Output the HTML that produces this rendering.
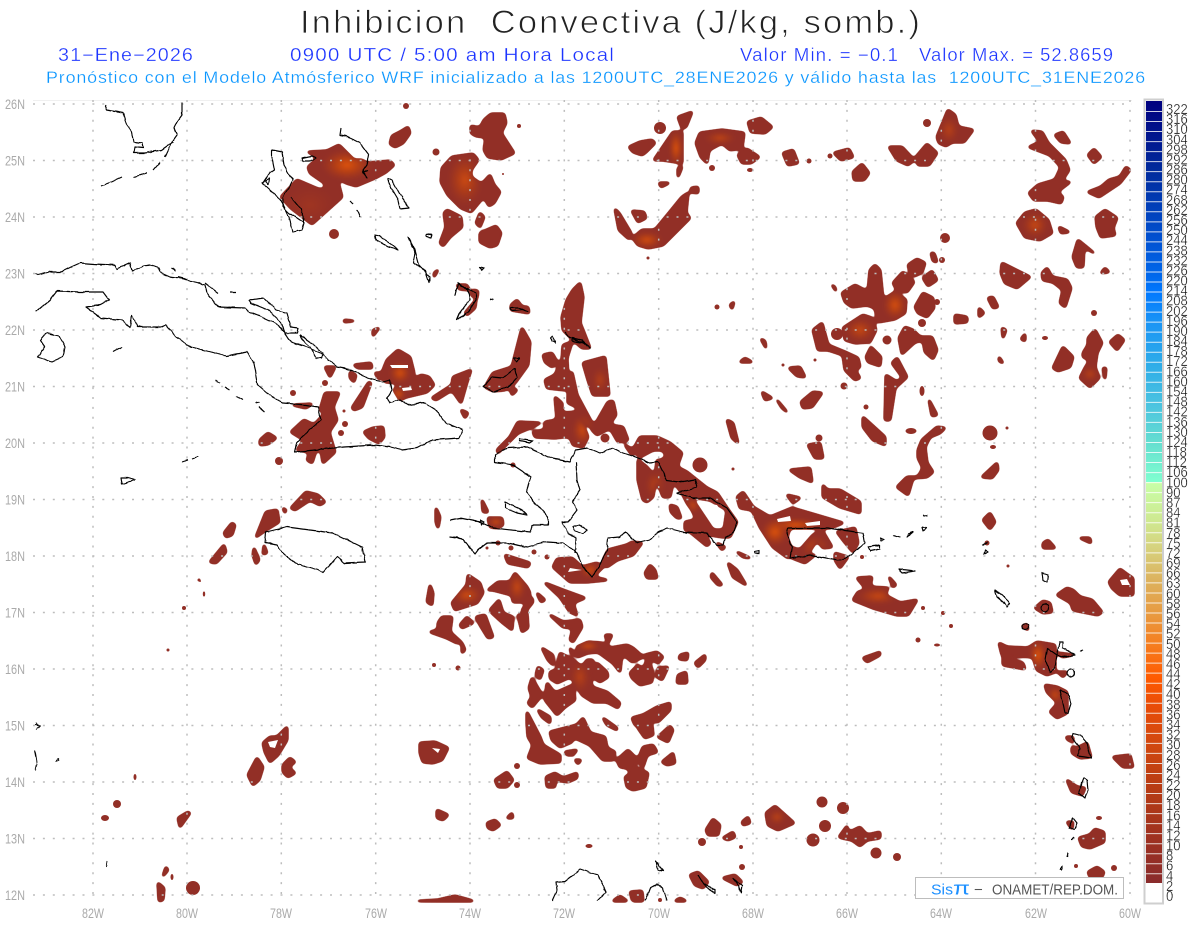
<!DOCTYPE html>
<html><head><meta charset="utf-8"><title>Inhibicion Convectiva</title>
<style>
html,body{margin:0;padding:0;background:#fff;width:1200px;height:927px;overflow:hidden}
svg{display:block;font-family:"Liberation Sans",sans-serif}
text{white-space:pre}
</style></head><body>
<svg width="1200" height="927" viewBox="0 0 1200 927" xmlns="http://www.w3.org/2000/svg">
<defs>
<filter id="sm" x="0" y="0" width="1200" height="927" filterUnits="userSpaceOnUse" color-interpolation-filters="sRGB"><feGaussianBlur stdDeviation="1.8"/><feComponentTransfer><feFuncA type="linear" slope="7" intercept="-2.6"/></feComponentTransfer></filter>
<filter id="wb" x="0" y="0" width="1200" height="927" filterUnits="userSpaceOnUse"><feTurbulence type="fractalNoise" baseFrequency=".13" numOctaves="2" seed="4" result="n"/><feDisplacementMap in="SourceGraphic" in2="n" scale="2.6" xChannelSelector="R" yChannelSelector="G"/></filter>
<radialGradient id="h"><stop offset="0" stop-color="#e0540c"/><stop offset=".45" stop-color="#c0440f" stop-opacity=".75"/><stop offset="1" stop-color="#a83a1c" stop-opacity="0"/></radialGradient>
<radialGradient id="m"><stop offset="0" stop-color="#b83f18" stop-opacity=".9"/><stop offset="1" stop-color="#a83a1c" stop-opacity="0"/></radialGradient>
<linearGradient id="cb1" gradientUnits="userSpaceOnUse" x1="0" y1="101" x2="0" y2="482">
<stop offset="0" stop-color="#00007f"/><stop offset=".18" stop-color="#002a9c"/><stop offset=".36" stop-color="#0050d0"/><stop offset=".46" stop-color="#0068ec"/><stop offset=".5" stop-color="#0078ff"/><stop offset=".58" stop-color="#1a94f5"/><stop offset=".7" stop-color="#30aee8"/><stop offset=".8" stop-color="#4cc4e0"/><stop offset=".9" stop-color="#66dfd0"/><stop offset="1" stop-color="#80ffd0"/>
</linearGradient>
<linearGradient id="cb2" gradientUnits="userSpaceOnUse" x1="0" y1="482" x2="0" y2="883">
<stop offset="0" stop-color="#c8ffa8"/><stop offset=".1" stop-color="#cfe890"/><stop offset=".16" stop-color="#d6d480"/><stop offset=".24" stop-color="#dcb460"/><stop offset=".33" stop-color="#e89a40"/><stop offset=".4" stop-color="#f58022"/><stop offset=".49" stop-color="#ff5a00"/><stop offset=".56" stop-color="#e84c08"/><stop offset=".66" stop-color="#d04810"/><stop offset=".76" stop-color="#b83c14"/><stop offset=".88" stop-color="#a03220"/><stop offset="1" stop-color="#8a2c2c"/>
</linearGradient>
<path id="bl" d="M308 152 327 151 339 145 346 152 354 160 362 160 367 163 390 161 394 165 386 172 375 178 356 186 346 183 337 177 330 182 323 182 310 173 308 167 316 160 314 155Z
M297 180 318 189 325 190 325 183 337 178 342 197 312 224 291 208 281 197Z
M408 127 410 133 403 143 395 147 390 144 392 136 400 132Z
M491 114 504 114 506 123 501 133 514 153 501 159 488 157 484 150 486 137 476 136 471 133 471 126 480 128 484 120Z
M452 157 473 154 478 160 471 170 471 177 481 184 481 200 471 212 461 208 448 195 441 182 442 168Z
M490 175 494 185 500 192 494 203 489 206 483 195 481 185Z
M447 210 461 217 462 227 450 237 443 246 440 243 446 227 444 213Z
M480 213 484 217 480 227 476 223Z
M496 226 501 233 497 245 490 247 480 242 480 233Z
M580 283 583 297 580 323 583 330 590 348 582 348 570 337 563 330 562 317 567 300 573 290Z
M563 345 572 342 567 358 568 380 565 390 547 388 545 380 555 375 562 360Z
M572 372 577 395 592 423 592 428 582 420 577 407 568 403 568 395 570 380Z
M543 355 552 353 557 362 552 367 545 362Z
M583 363 605 357 609 395 593 395 588 380Z
M608 402 613 401 616 415 609 425 623 427 628 440 618 442 610 428 597 435 592 430Z
M555 397 562 403 562 413 577 412 582 423 588 437 583 447 573 445 570 437 563 437 555 438 535 437 533 432 545 430 545 422 557 420Z
M518 422 540 423 530 428 518 433 498 453 497 450 510 437Z
M640 437 657 437 670 443 682 453 677 467 687 472 707 488 717 493 727 508 737 522 730 537 723 537 727 510 710 500 697 498 683 495 675 483 667 480 663 467 657 462 667 457 663 450 653 450 640 457 633 450Z
M625 445 633 450 632 455Z
M638 460 647 467 655 477 657 460 663 463 672 487 670 497 663 497 658 483 655 483 653 497 647 502 643 500 638 480Z
M683 495 693 500 713 530 722 530 723 537 710 535 698 523 692 510 687 503Z
M670 505 677 507 681 518 677 518 671 512Z
M685 522 695 520 703 533 710 543 707 546 690 532 685 530Z
M717 543 725 547 722 550Z
M727 420 733 423 738 443 732 438Z
M790 470 810 468 812 482 800 477Z
M808 445 820 443 823 458 815 458Z
M863 417 885 437 885 445 873 440 863 427Z
M823 485 827 490 840 490 860 502 860 513 840 507 823 497Z
M787 495 800 498 793 503Z
M737 497 743 492 753 507 770 517 792 508 843 523 830 528 790 528 787 537 792 550 788 558 773 547 760 527 752 510 740 508Z
M790 547 800 550 813 535 822 530 832 547 823 548 817 540 807 555 815 555 805 563 792 558Z
M837 532 855 528 858 543 853 552 843 540Z
M835 553 848 557 840 568 835 560Z
M603 560 608 550 627 545 632 542 642 543 633 555 617 560 607 567Z
M553 567 557 559 572 558 582 567 597 563 603 567 593 577 607 580 587 582 570 582 562 575Z
M650 565 655 570 657 578 647 578 645 573Z
M728 563 737 570 746 585 733 577Z
M712 573 722 585 718 585 711 577Z
M737 552 750 558 743 557Z
M488 518 502 518 503 525 498 528 490 527Z
M482 500 488 512 483 512Z
M505 555 530 563 528 567 508 563Z
M452 603 467 585 468 575 480 583 483 593 477 603 455 610Z
M430 585 433 593 432 605 427 602Z
M488 590 498 582 510 582 515 573 527 587 530 593 527 602 513 602 512 595 493 590Z
M537 593 545 600 541 602Z
M490 610 499 600 503 613 513 617 512 630 503 623 492 613Z
M518 615 527 613 528 628 522 632Z
M522 610 532 598 533 602 525 612Z
M476 617 485 615 493 637 488 638 480 625Z
M467 617 473 623 462 628 460 625Z
M438 623 442 617 452 617 450 632 461 642 457 643 447 638 430 632 438 630Z
M462 643 465 650 462 653Z
M545 583 563 590 585 598 573 603 577 615 570 612 560 597Z
M550 615 563 622 580 620 582 627 573 642 570 640 573 628 563 627Z
M605 635 612 635 608 643Z
M577 647 588 642 602 643 610 648 627 645 633 648 643 657 632 662 622 653 620 672 613 663 598 652 587 653 578 657Z
M560 653 573 660 582 667 587 660 593 660 590 677 592 687 607 692 620 703 618 708 607 702 593 702 582 695 575 682 570 677 557 683 550 678 550 672 557 670Z
M597 663 607 672 608 677 600 682 593 677Z
M547 683 555 693 573 685 575 700 565 707 557 715 545 700Z
M532 678 542 695 532 707 528 703 532 697 529 688Z
M538 667 543 670 540 679 536 675Z
M542 648 553 655 553 665 548 660Z
M570 648 575 655 571 653Z
M538 710 550 717 550 723 542 717Z
M527 712 540 737 543 745 560 755 560 762 540 763 528 758 533 745 528 737 527 723Z
M550 732 577 725 583 718 590 733 605 737 607 748 615 752 613 760 603 760 590 745 573 737 572 742 560 747 552 740Z
M565 752 577 750 573 755 567 755Z
M575 760 581 760 578 764Z
M603 718 617 728 617 730 607 725Z
M632 718 643 715 657 707 670 703 670 710 658 722 648 720 643 727 635 725Z
M638 728 652 725 653 735 645 738Z
M658 737 670 726 673 730 668 742Z
M638 760 643 747 653 745 657 752 647 755 643 767Z
M617 760 628 750 635 757 635 768 648 773 645 787 633 790 627 787 625 777 632 773 627 768 620 767Z
M662 762 673 753 675 763 667 765Z
M630 673 638 665 643 670 648 657 652 670 652 682 640 685 632 678Z
M645 655 657 652 663 657 658 663 650 658Z
M658 668 668 667 662 680 657 677Z
M680 655 688 653 687 660 679 659Z
M695 663 705 655 705 660 698 667Z
M678 675 686 672 687 683 677 683Z
M495 780 507 772 513 780 507 787 498 787Z
M420 743 435 742 448 748 442 760 433 763 423 762 420 753Z
M546 777 555 773 563 778 577 773 577 778 568 782 555 780 555 787 547 787Z
M437 810 448 815 443 820 437 818Z
M487 823 495 820 500 825 493 830 488 828Z
M507 818 512 813 513 818Z
M706 830 713 819 720 825 718 835 708 835Z
M723 838 733 832 735 837 728 840Z
M742 822 748 817 750 823 743 825Z
M766 813 775 806 794 823 778 830 768 825Z
M690 875 698 872 708 882 703 888 695 885Z
M723 878 735 875 742 882 737 885Z
M418 901 438 900 455 896 473 901Z
M613 901 620 896 627 901Z
M630 892 642 891 643 901 633 901Z
M675 901 680 898 686 901Z
M857 578 872 577 870 587 888 588 885 595 900 603 917 600 908 615 897 615 873 608 853 600 858 592 867 590Z
M889 577 896 585 893 587Z
M863 658 880 652 880 655 867 662Z
M999 643 1007 647 1028 648 1037 642 1055 645 1055 672 1047 675 1037 670 1033 657 1002 655Z
M1003 658 1023 663 1025 669 1003 665Z
M1058 653 1073 655 1062 657Z
M1058 672 1067 672 1063 677Z
M1045 685 1057 687 1067 692 1067 713 1057 718 1050 712 1058 703 1047 692Z
M1072 747 1077 748 1087 743 1091 757 1080 758 1072 753Z
M1066 737 1073 737 1073 742 1068 740Z
M1113 757 1130 755 1133 767 1123 767Z
M1067 780 1077 787 1085 788 1082 795 1072 792Z
M1067 822 1073 822 1072 829Z
M1079 838 1090 835 1095 829 1104 832 1104 842 1090 848 1082 846Z
M1088 872 1097 867 1104 872 1102 877 1090 877Z
M1109 582 1120 569 1128 575 1133 578 1133 595 1120 595 1112 588Z
M1057 595 1067 588 1073 590 1080 597 1092 600 1102 612 1098 615 1073 610 1071 603Z
M1035 608 1043 601 1050 603 1052 612 1043 613Z
M1022 626 1027 624 1028 630Z
M839 837 847 826 848 833 860 827 867 835 880 832 880 838 867 840 860 846 852 840 842 838Z
M842 293 855 285 868 292 870 270 875 265 880 270 883 300 895 292 906 300 905 313 895 319 878 322 875 308 867 305 852 307 845 302Z
M908 265 917 259 925 263 922 272 915 276 910 272Z
M893 283 903 272 914 282 907 292 897 290Z
M923 278 932 271 937 280 928 286Z
M915 307 923 293 933 298 934 308 927 317 918 313Z
M931 253 934 253 937 262 933 261Z
M1002 263 1030 277 1017 288 1005 283 1001 273Z
M1042 273 1047 268 1052 277 1067 280 1071 288 1065 307 1060 303 1063 290 1053 282 1043 280Z
M1073 257 1078 240 1094 253 1084 247 1083 267 1077 267Z
M629 147 640 142 652 140 655 143 646 152 642 155 633 152Z
M678 117 692 112 686 127 682 128Z
M654 160 673 132 682 132 682 163 663 160Z
M678 168 682 167 678 177Z
M659 183 669 183 661 187Z
M696 143 700 133 722 130 744 133 742 148 730 150 722 143 709 150 707 163 701 157Z
M748 122 761 118 772 127 765 133 751 132Z
M738 155 747 149 759 157 751 163 742 163Z
M783 153 793 150 798 163 788 165Z
M834 153 849 149 853 157 841 160Z
M853 172 862 164 869 173 864 180 854 180Z
M889 147 902 147 914 160 908 165 897 160Z
M916 157 927 144 937 153 929 165 918 165Z
M937 137 948 110 955 115 958 127 973 130 964 142 952 142 946 146 939 143Z
M1032 131 1042 132 1048 143 1065 160 1069 170 1061 182 1070 182 1057 192 1063 197 1061 203 1048 200 1034 200 1029 193 1038 185 1055 180 1061 167 1050 155 1029 147 1040 142Z
M1055 135 1063 132 1070 143 1061 142Z
M1088 155 1094 149 1101 157 1094 163Z
M1088 192 1101 187 1109 180 1120 177 1126 167 1130 170 1120 183 1099 197Z
M1017 223 1025 213 1036 210 1048 220 1052 233 1040 240 1025 237Z
M1096 217 1105 210 1117 218 1113 228 1115 235 1101 237 1097 227Z
M1059 227 1069 232 1061 233Z
M1105 268 1109 272 1101 273Z
M633 238 642 230 655 230 669 213 682 197 688 193 686 213 690 218 678 230 663 245 648 248 638 245Z
M615 209 619 213 631 233 629 239 619 230Z
M632 211 644 212 646 218 638 222Z
M691 188 698 187 698 193 691 192Z
M813 330 822 323 828 345 845 352 858 358 860 367 855 370 860 378 855 380 845 370 843 355 828 350 818 350Z
M843 328 863 315 872 318 876 330 870 342 855 343 845 340Z
M866 357 871 347 881 357 880 366 868 362Z
M899 338 905 327 913 330 920 337 932 337 937 350 933 359 925 352 923 340 915 342 902 354Z
M892 363 897 358 907 377 895 388 890 420 885 420 886 375 897 382 903 378Z
M801 402 813 392 822 393 812 407 803 408Z
M789 368 800 367 805 377 797 376Z
M929 400 937 415 932 416Z
M918 450 922 440 937 427 945 428 940 433 930 437 925 447 927 463 933 472 927 477 913 478 908 495 897 487 907 477 918 477 923 468 918 458Z
M982 477 997 463 998 470 992 478Z
M983 520 990 513 995 522 990 529Z
M1080 538 1090 538 1091 543Z
M1043 543 1048 540 1055 548 1043 548Z
M955 315 967 317 967 322 955 323Z
M979 308 984 313 979 317Z
M988 298 993 297 998 307 993 308Z
M1002 328 1006 330 1003 338Z
M1021 339 1025 334 1025 341Z
M999 357 1003 363 999 361Z
M1053 368 1063 347 1073 357 1070 367 1058 371Z
M1083 353 1088 345 1088 338 1095 330 1102 343 1097 353 1095 367 1099 378 1090 387 1080 378 1085 368 1090 360 1083 357Z
M1110 342 1118 335 1124 340 1117 350Z
M1103 368 1106 368 1105 379Z
M383 370 387 360 398 350 410 357 414 373 411 382 421 375 429 377 434 385 427 392 406 397 400 400 394 390 400 383 385 382Z
M375 373 383 373 383 378 379 379Z
M432 398 452 385 453 377 471 370 467 382 461 403 452 390 436 400Z
M461 410 468 413 465 418Z
M325 367 335 367 330 377Z
M354 365 371 363 372 368 358 368Z
M373 330 379 328 373 336Z
M344 320 354 321 344 322Z
M352 408 369 382 371 383 362 407 354 410Z
M350 372 356 375 354 382 350 378Z
M320 410 325 393 339 393 333 407 337 420 329 432 335 452 323 463 321 450 316 450 312 463 307 460 310 452 297 450 304 440 291 432 304 420 314 425 325 413Z
M293 405 312 404 306 408Z
M260 440 268 433 276 438 268 444 260 445Z
M364 432 373 428 383 427 384 437 379 443 369 438Z
M436 508 440 517 438 528 436 522Z
M291 508 306 492 318 495 325 502 320 505 310 500 295 510Z
M283 508 286 510 285 513Z
M256 537 266 512 277 510 279 522 266 530Z
M254 548 259 560 256 564 253 555Z
M264 545 267 553 263 554Z
M224 533 232 523 235 525 232 535 226 537Z
M210 562 224 545 226 552 216 563Z
M457 285 467 285 469 290 459 289Z
M473 290 478 291 477 298 471 295Z
M465 313 476 300 475 308 467 315Z
M434 273 438 270 434 277Z
M511 305 517 300 522 307 528 307 529 313 511 310Z
M485 387 493 373 512 367 522 328 530 342 528 365 515 383 505 390 493 391Z
M510 388 517 390 512 395Z
M730 305 734 302 732 309Z
M832 285 835 287 836 291Z
M761 339 765 341 766 348Z
M745 358 752 362 740 362Z
M762 392 772 398 765 400Z
M777 400 787 412 782 408Z
M263 743 270 737 277 737 287 727 287 740 278 755 270 762 265 752Z
M248 775 257 758 263 767 259 780 253 785Z
M283 765 290 758 295 762 288 767 295 773 288 777 283 772Z
M178 818 188 812 190 813 180 827Z
M166 867 168 870 163 876Z
M158 883 164 888 163 900 159 901Z"/>
<clipPath id="c"><use href="#bl"/></clipPath>
</defs>

<!-- titles -->
<text x="300" y="33" font-size="32" letter-spacing="2" fill="#222" stroke="#fff" stroke-width=".8" paint-order="fill" textLength="622" lengthAdjust="spacingAndGlyphs">Inhibicion  Convectiva (J/kg, somb.)</text>
<g font-size="18" letter-spacing="1" fill="#1c34ff" stroke="#fff" stroke-width=".3">
<text x="58" y="61" textLength="136" lengthAdjust="spacingAndGlyphs">31−Ene−2026</text>
<text x="290" y="61" textLength="325" lengthAdjust="spacingAndGlyphs">0900 UTC / 5:00 am Hora Local</text>
<text x="740" y="61" textLength="159" lengthAdjust="spacingAndGlyphs">Valor Min. = −0.1</text>
<text x="919" y="61" textLength="195" lengthAdjust="spacingAndGlyphs">Valor Max. = 52.8659</text>
</g>
<text x="46" y="83" font-size="17" letter-spacing=".8" fill="#0a96ff" stroke="#fff" stroke-width=".25" textLength="1100" lengthAdjust="spacingAndGlyphs">Pronóstico con el Modelo Atmósferico WRF inicializado a las 1200UTC_28ENE2026 y válido hasta las  1200UTC_31ENE2026</text>

<path d="M33 100.5H1132" stroke="#f0f0f0" fill="none"/>

<!-- convective blobs -->
<g filter="url(#sm)">
<use href="#bl" fill="#922f26" stroke="#922f26" stroke-width="3" stroke-linejoin="round"/>
<g clip-path="url(#c)">
<ellipse cx="347" cy="165" rx="26" ry="16" fill="url(#h)"/>
<ellipse cx="310" cy="205" rx="25" ry="20" fill="url(#m)" opacity=".4"/>
<ellipse cx="465" cy="180" rx="18" ry="26" fill="url(#h)" opacity=".75"/>
<ellipse cx="676" cy="148" rx="7" ry="18" fill="url(#h)"/>
<ellipse cx="647" cy="240" rx="16" ry="9" fill="url(#h)" opacity=".85"/>
<ellipse cx="895" cy="305" rx="12" ry="15" fill="url(#h)" opacity=".9"/>
<ellipse cx="860" cy="330" rx="15" ry="12" fill="url(#h)" opacity=".7"/>
<ellipse cx="1035" cy="225" rx="13" ry="13" fill="url(#h)" opacity=".7"/>
<ellipse cx="400" cy="373" rx="11" ry="11" fill="url(#h)" opacity=".9"/>
<ellipse cx="398" cy="394" rx="8" ry="7" fill="url(#h)"/>
<ellipse cx="583" cy="430" rx="11" ry="16" fill="url(#h)" opacity=".8"/>
<ellipse cx="467" cy="595" rx="15" ry="10" fill="url(#h)" opacity=".8"/>
<ellipse cx="517" cy="587" rx="9" ry="15" fill="url(#h)" opacity=".7"/>
<ellipse cx="588" cy="646" rx="12" ry="5" fill="url(#h)" opacity=".8"/>
<ellipse cx="580" cy="677" rx="10" ry="16" fill="url(#h)" opacity=".5"/>
<ellipse cx="878" cy="596" rx="22" ry="9" fill="url(#h)" opacity=".7"/>
<ellipse cx="795" cy="525" rx="26" ry="7" fill="url(#h)"/>
<ellipse cx="775" cy="532" rx="14" ry="14" fill="url(#h)"/>
<ellipse cx="1038" cy="655" rx="9" ry="16" fill="url(#h)"/>
<ellipse cx="1055" cy="695" rx="8" ry="9" fill="url(#h)" opacity=".7"/>
<ellipse cx="496" cy="522" rx="8" ry="5" fill="url(#h)" opacity=".8"/>
<ellipse cx="777" cy="817" rx="9" ry="8" fill="url(#h)" opacity=".55"/>
<ellipse cx="1090" cy="374" rx="9" ry="8" fill="url(#h)" opacity=".5"/>
<ellipse cx="949" cy="130" rx="10" ry="14" fill="url(#h)" opacity=".5"/>
<ellipse cx="720" cy="138" rx="16" ry="7" fill="url(#h)" opacity=".6"/>
<ellipse cx="600" cy="380" rx="8" ry="13" fill="url(#h)" opacity=".45"/>
<ellipse cx="693" cy="505" rx="7" ry="8" fill="url(#h)" opacity=".7"/>
<ellipse cx="655" cy="485" rx="10" ry="15" fill="url(#h)" opacity=".5"/>
<ellipse cx="590" cy="570" rx="10" ry="8" fill="url(#h)" opacity=".8"/>
<ellipse cx="815" cy="547" rx="14" ry="12" fill="url(#h)" opacity=".6"/>
</g></g>

<g fill="#922f26">
<circle cx="436" cy="152" r="3.5"/><circle cx="519" cy="126" r="2"/><circle cx="503" cy="174" r="1"/><circle cx="334" cy="234" r="5"/><circle cx="406" cy="106" r="3"/>
<circle cx="605" cy="438" r="4.5"/><circle cx="700" cy="465" r="7.5"/><circle cx="733" cy="469" r="1.5"/><circle cx="819" cy="438" r="3.5"/>
<circle cx="513" cy="465" r="2.5"/><circle cx="498" cy="543" r="2.5"/><circle cx="511" cy="548" r="2.5"/><circle cx="534" cy="552" r="2.5"/><circle cx="547" cy="557" r="2.5"/><circle cx="487" cy="548" r="1.5"/>
<circle cx="458" cy="668" r="2.5"/><circle cx="434" cy="665" r="2"/><circle cx="517" cy="766" r="3"/><circle cx="517" cy="785" r="3"/><circle cx="702" cy="842" r="4"/><circle cx="741" cy="847" r="2"/><circle cx="742" cy="867" r="3"/><ellipse cx="589" cy="846" rx="3.5" ry="2"/><circle cx="660" cy="900" r="2"/>
<circle cx="1114" cy="868" r="3"/><circle cx="1076" cy="866" r="2"/><ellipse cx="1099" cy="818" rx="3" ry="2"/><circle cx="923" cy="608" r="2"/><circle cx="943" cy="613" r="2"/><circle cx="951" cy="626" r="2"/><circle cx="918" cy="640" r="2.5"/><ellipse cx="937" cy="645" rx="3" ry="1.5"/><circle cx="1008" cy="566" r="1.5"/><circle cx="987" cy="543" r="2.5"/><circle cx="862" cy="557" r="2"/>
<circle cx="822" cy="802" r="5.5"/><circle cx="843" cy="808" r="6"/><circle cx="825" cy="826" r="6"/><circle cx="813" cy="840" r="6.5"/><circle cx="876" cy="853" r="5.5"/><circle cx="897" cy="857" r="4"/>
<circle cx="660" cy="128" r="6"/><circle cx="712" cy="168" r="3"/><ellipse cx="750" cy="170" rx="3" ry="2"/><circle cx="809" cy="161" r="2.5"/><circle cx="830" cy="156" r="2.5"/><circle cx="927" cy="123" r="4"/><circle cx="945" cy="238" r="5"/><circle cx="648" cy="258" r="1.5"/>
<circle cx="937" cy="302" r="3"/><circle cx="922" cy="323" r="4"/><circle cx="942" cy="260" r="3"/><circle cx="837" cy="334" r="6"/><circle cx="887" cy="340" r="4.5"/><circle cx="844" cy="386" r="3.5"/><ellipse cx="922" cy="391" rx="2.5" ry="5"/><circle cx="866" cy="407" r="2.5"/><ellipse cx="911" cy="431" rx="5.5" ry="3"/><circle cx="990" cy="433" r="7.5"/><ellipse cx="993" cy="447" rx="3" ry="2"/><circle cx="1007" cy="428" r="1.5"/><ellipse cx="1045" cy="338" rx="3" ry="2"/><circle cx="1094" cy="313" r="3"/>
<circle cx="325" cy="383" r="3"/><circle cx="293" cy="393" r="3"/><circle cx="344" cy="411" r="1.5"/><circle cx="345" cy="424" r="3"/><circle cx="341" cy="433" r="3"/><circle cx="279" cy="461" r="4"/><circle cx="199" cy="580" r="1.5"/>
<circle cx="717" cy="307" r="2.5"/><circle cx="783" cy="365" r="1.5"/><circle cx="815" cy="360" r="1.5"/>
<circle cx="117" cy="804" r="4"/><ellipse cx="105" cy="818" rx="4" ry="3"/><ellipse cx="135" cy="777" rx="1.5" ry="3"/><ellipse cx="172" cy="877" rx="1.5" ry="3"/><circle cx="193" cy="888" r="7"/><circle cx="184" cy="608" r="2"/><ellipse cx="204" cy="594" rx="1.2" ry="2.5"/><circle cx="168" cy="650" r="1.5"/><circle cx="200" cy="581" r="1"/>
</g>

<!-- holes in blobs -->
<g fill="#fff">
<path d="M390 365 408 365 408 368 392 368Z M402 388 411 387 412 390 403 391Z M432 748 440 749 438 753Z M268 742 278 740 275 748 270 747Z M1120 580 1127 579 1130 585 1122 585Z M720 522 712 510 703 503 717 505 724 515Z M570 568 582 570 568 572Z M777 519 790 516 791 521 778 522Z M805 523 820 521 820 525 807 526Z"/>
</g>

<!-- grid -->
<g stroke="#bdbdbd" stroke-width="1.5" stroke-dasharray="2 7.9" fill="none">
<path d="M33 104H1132M33 160.5H1132M33 217H1132M33 273.5H1132M33 330H1132M33 386.5H1132M33 443H1132M33 499.5H1132M33 556H1132M33 612.5H1132M33 669H1132M33 725.5H1132M33 782H1132M33 838.5H1132M33 895H1132"/>
<path d="M93 100V900M187 100V900M281.3 100V900M375.7 100V900M470 100V900M564.3 100V900M658.7 100V900M753 100V900M847 100V900M941.3 100V900M1035.5 100V900M1130 100V900"/>
</g>

<!-- coast -->
<g fill="none" stroke="#000" stroke-width="1.15" stroke-linejoin="round" filter="url(#wb)">
<path d="M105 105 107 110 123 113 126 123 132 132 134 142 142 143 143 148 135 147 134 153 145 153 161 150 168 145 174 142"/>
<path d="M182 102 182 115 177 122 174 128 177 135 172 142 165 157M160 162 153 170M147 173 134 177M122 177 111 182 101 186"/>
<path d="M341 128 340 135 346 136 360 143 369 155 367 165 362 172 367 178 363 172 368 170"/>
<path d="M272 150 282 152 284 165 293 180 283 197 283 207 289 213 304 223 302 230 293 232 289 217 281 200 272 192 262 183 266 177 274 170 272 160Z"/>
<path d="M302 158 312 156 316 158 310 161 303 161Z M291 197 302 210 303 222 M265 180 269 178 268 185Z"/>
<path d="M388 178 392 180 402 198 409 208 400 209 398 200 388 183Z M350 201 353 204 M357 210 360 217"/>
<path d="M375 235 379 236 390 243 398 250 385 245 376 240Z M408 237 415 250 419 265 430 277 429 282 425 270 413 263 415 253Z M426 235 432 234 431 238 426 237Z M479 267 484 268 482 270Z"/>
<path d="M35 274 38 275 50 272 61 272 71 267 80 263 94 264 115 265 117 269 130 263 132 271 144 266 149 265 159 268 161 273 170 277 188 280 205 285 207 293 218 307 245 308 249 312 264 318 279 325 291 342 306 347 321 353 337 367 352 370 367 378 383 382 390 380 392 390 387 398 390 403 400 400 408 405 425 403 436 410 446 423 463 430 459 438 432 440 417 448 402 450 390 447 375 445 344 447 314 450 295 452 297 443 306 433 321 420 318 407 306 405 283 403 272 397 258 385 254 363 247 352 226 356 203 350 191 347 176 337 166 325 161 327 138 327 132 315 130 327 122 320 101 318 86 307 100 305 109 300 103 292 80 292 57 291 50 300 38 310 35 311"/>
<path d="M249 300 264 298 276 310 287 313 291 327 298 328 297 333 285 333 281 322 268 310 251 303Z M300 335 314 345 323 353 321 358 316 358 310 347 302 340Z M46 333 59 336 65 347 63 357 52 362 38 357 45 347 40 340Z"/>
<path d="M113 352 122 347 M216 380 220 383 M225 387 230 390 M236 396 243 400 M256 402 260 403 M259 407 265 412 M182 462 188 460 M192 459 198 457 M121 478 122 484 135 480 128 478Z M230 292 236 292 M205 283 218 293 M172 268 176 271 M178 277 186 279"/>
<path d="M497 453 508 448 527 447 538 452 550 458 570 462 576 450 587 448 600 453 613 448 623 453 635 457 650 463 658 462 667 480 683 482 695 480 697 487 677 493 693 498 710 498 727 508 737 522 733 533 725 537 723 545 717 545 707 533 683 532 667 528 658 532 650 540 637 543 630 537 625 532 620 537 608 538 607 550 597 570 592 577 583 567 577 553 563 543 547 542 527 547 507 543 487 543 478 550 475 554 463 539 450 537"/>
<path d="M450 520 460 518 480 522 493 528 530 532 533 525 548 525 548 517 530 497 526 492 531 477 513 465 495 462 495 455 497 453"/>
<path d="M576 462 577 480 580 490 572 502 577 510 568 522 562 522 568 533 576 538 575 553"/>
<path d="M505 502 522 510 527 515 517 513 505 508Z M573 527 580 525 587 530 583 534 575 531Z M520 439 533 441 530 443 520 441Z M480 520 484 522 481 524Z"/>
<path d="M788 528 827 528 863 533 865 543 857 550 847 558 838 560 810 555 790 558 792 547 787 533Z"/>
<path d="M868 547 880 545 880 549 870 551Z M880 538 884 540 881 541Z M893 535 900 537 M907 537 913 532 908 534Z M922 527 926 528 923 531Z M923 515 928 516 M755 551 759 550 759 553 755 553Z"/>
<path d="M457 283 476 293 476 300 468 312 457 320 460 313 470 300 468 290 458 284 455 295"/>
<path d="M510 308 518 308 528 312 522 310 512 311Z M565 332 570 338 582 342 590 348 M572 338 582 340 584 343 572 341Z M550 338 552 336 556 343 552 341Z"/>
<path d="M483 387 492 377 503 378 515 368 517 377 508 387 493 392Z M513 358 520 358 517 362Z M490 299 494 300"/>
<path d="M266 532 287 527 333 533 362 547 365 562 344 563 337 557 323 573 318 570 295 563 283 553 277 545 265 543Z"/>
<path d="M552 901 557 890 556 882 565 881 573 875 580 869 598 875 606 892 597 901 M645 901 650 888 657 884 663 888 667 901 M656 861 663 871 658 870Z M698 875 703 883 715 890 715 893 705 886Z M733 878 742 885 741 893 737 883Z"/>
<path d="M899 569 915 571 902 573Z M982 546 988 542 M985 550 988 552 984 554Z M995 590 1002 595 1010 603 1007 607 1003 602 997 597Z M1042 573 1048 575 1047 582 1043 580Z M1041 608a4 4 0 1 0 8 0a4 4 0 1 0-8 0Z M1022 627a3 3 0 1 0 6 0a3 3 0 1 0-6 0Z"/>
<path d="M1047 648 1045 660 1050 672 1055 668 1057 655 1060 642 1063 642 1063 648 1075 655 1062 657 1057 655Z M1067 673a3.5 3.5 0 1 0 7 0a3.5 3.5 0 1 0-7 0Z M1060 690 1068 694 1071 703 1068 713 1065 713 1063 703Z M1073 733 1080 735 1087 743 1091 758 1078 756 1080 748 1075 742 1072 737Z M1084 778 1087 780 1088 790 1085 798 1079 793 1082 783Z M1073 818 1077 823 1074 830 1069 828 1072 820Z M1072 840 1074 837 M1067 857 1068 853 M1060 869 1062 866 1062 870Z M1080 651 1083 650"/>
<path d="M35 725 40 726 36 729 M36 723 38 726 M35 750 37 762 35 770 M56 761 59 760 58 758Z M107 861 106 867" stroke-width=".9"/>
</g>

<!-- axis labels -->
<g font-size="14" fill="#aaa">
<text x="5" y="109" textLength="20" lengthAdjust="spacingAndGlyphs">26N</text><text x="5" y="165.5" textLength="20" lengthAdjust="spacingAndGlyphs">25N</text><text x="5" y="222" textLength="20" lengthAdjust="spacingAndGlyphs">24N</text><text x="5" y="278.5" textLength="20" lengthAdjust="spacingAndGlyphs">23N</text><text x="5" y="335" textLength="20" lengthAdjust="spacingAndGlyphs">22N</text><text x="5" y="391.5" textLength="20" lengthAdjust="spacingAndGlyphs">21N</text><text x="5" y="448" textLength="20" lengthAdjust="spacingAndGlyphs">20N</text><text x="5" y="504.5" textLength="20" lengthAdjust="spacingAndGlyphs">19N</text><text x="5" y="561" textLength="20" lengthAdjust="spacingAndGlyphs">18N</text><text x="5" y="617.5" textLength="20" lengthAdjust="spacingAndGlyphs">17N</text><text x="5" y="674" textLength="20" lengthAdjust="spacingAndGlyphs">16N</text><text x="5" y="730.5" textLength="20" lengthAdjust="spacingAndGlyphs">15N</text><text x="5" y="787" textLength="20" lengthAdjust="spacingAndGlyphs">14N</text><text x="5" y="843.5" textLength="20" lengthAdjust="spacingAndGlyphs">13N</text><text x="5" y="900" textLength="20" lengthAdjust="spacingAndGlyphs">12N</text>
<text x="82" y="918" textLength="22" lengthAdjust="spacingAndGlyphs">82W</text><text x="176" y="918" textLength="22" lengthAdjust="spacingAndGlyphs">80W</text><text x="270" y="918" textLength="22" lengthAdjust="spacingAndGlyphs">78W</text><text x="365" y="918" textLength="22" lengthAdjust="spacingAndGlyphs">76W</text><text x="459" y="918" textLength="22" lengthAdjust="spacingAndGlyphs">74W</text><text x="553" y="918" textLength="22" lengthAdjust="spacingAndGlyphs">72W</text><text x="648" y="918" textLength="22" lengthAdjust="spacingAndGlyphs">70W</text><text x="742" y="918" textLength="22" lengthAdjust="spacingAndGlyphs">68W</text><text x="836" y="918" textLength="22" lengthAdjust="spacingAndGlyphs">66W</text><text x="930" y="918" textLength="22" lengthAdjust="spacingAndGlyphs">64W</text><text x="1025" y="918" textLength="22" lengthAdjust="spacingAndGlyphs">62W</text><text x="1119" y="918" textLength="22" lengthAdjust="spacingAndGlyphs">60W</text>
</g>

<!-- credit box -->
<rect x="915.5" y="877.5" width="208" height="21" fill="#fff" stroke="#bdbdbd"/>
<text x="931" y="894.5" font-size="15" fill="#1e90ff" textLength="22" lengthAdjust="spacingAndGlyphs">Sis</text>
<text x="953" y="894.5" font-size="18" fill="#1e90ff" textLength="17" lengthAdjust="spacingAndGlyphs">π</text>
<text x="974" y="894.5" font-size="15" fill="#555">−</text>
<text x="992" y="894.5" font-size="15" fill="#555" textLength="126" lengthAdjust="spacingAndGlyphs">ONAMET/REP.DOM.</text>

<!-- colour bar -->
<rect x="1144.5" y="99.5" width="18.5" height="804" fill="#fff" stroke="#cfcfcf" stroke-width="2"/>
<rect x="1146" y="101" width="16" height="381" fill="url(#cb1)"/>
<rect x="1146" y="482" width="16" height="401" fill="url(#cb2)"/>
<path d="M1154 111V883" stroke="#fff" stroke-width="16" stroke-dasharray="1 9.03" opacity=".8" fill="none"/>
<text font-size="14.5" fill="#111" stroke="#fff" stroke-width=".3" transform="scale(.9 1)"><tspan x="1295.6" y="114">322</tspan><tspan x="1295.6" dy="10.09">316</tspan><tspan x="1295.6" dy="10.09">310</tspan><tspan x="1295.6" dy="10.09">304</tspan><tspan x="1295.6" dy="10.09">298</tspan><tspan x="1295.6" dy="10.09">292</tspan><tspan x="1295.6" dy="10.09">286</tspan><tspan x="1295.6" dy="10.09">280</tspan><tspan x="1295.6" dy="10.09">274</tspan><tspan x="1295.6" dy="10.09">268</tspan><tspan x="1295.6" dy="10.09">262</tspan><tspan x="1295.6" dy="10.09">256</tspan><tspan x="1295.6" dy="10.09">250</tspan><tspan x="1295.6" dy="10.09">244</tspan><tspan x="1295.6" dy="10.09">238</tspan><tspan x="1295.6" dy="10.09">232</tspan><tspan x="1295.6" dy="10.09">226</tspan><tspan x="1295.6" dy="10.09">220</tspan><tspan x="1295.6" dy="10.09">214</tspan><tspan x="1295.6" dy="10.09">208</tspan><tspan x="1295.6" dy="10.09">202</tspan><tspan x="1295.6" dy="10.09">196</tspan><tspan x="1295.6" dy="10.09">190</tspan><tspan x="1295.6" dy="10.09">184</tspan><tspan x="1295.6" dy="10.09">178</tspan><tspan x="1295.6" dy="10.09">172</tspan><tspan x="1295.6" dy="10.09">166</tspan><tspan x="1295.6" dy="10.09">160</tspan><tspan x="1295.6" dy="10.09">154</tspan><tspan x="1295.6" dy="10.09">148</tspan><tspan x="1295.6" dy="10.09">142</tspan><tspan x="1295.6" dy="10.09">136</tspan><tspan x="1295.6" dy="10.09">130</tspan><tspan x="1295.6" dy="10.09">124</tspan><tspan x="1295.6" dy="10.09">118</tspan><tspan x="1295.6" dy="10.09">112</tspan><tspan x="1295.6" dy="10.09">106</tspan><tspan x="1295.6" dy="10.09">100</tspan><tspan x="1295.6" dy="10.09">90</tspan><tspan x="1295.6" dy="10.09">87</tspan><tspan x="1295.6" dy="10.09">84</tspan><tspan x="1295.6" dy="10.09">81</tspan><tspan x="1295.6" dy="10.09">78</tspan><tspan x="1295.6" dy="10.09">75</tspan><tspan x="1295.6" dy="10.09">72</tspan><tspan x="1295.6" dy="10.09">69</tspan><tspan x="1295.6" dy="10.09">66</tspan><tspan x="1295.6" dy="10.09">63</tspan><tspan x="1295.6" dy="10.09">60</tspan><tspan x="1295.6" dy="10.09">58</tspan><tspan x="1295.6" dy="10.09">56</tspan><tspan x="1295.6" dy="10.09">54</tspan><tspan x="1295.6" dy="10.09">52</tspan><tspan x="1295.6" dy="10.09">50</tspan><tspan x="1295.6" dy="10.09">48</tspan><tspan x="1295.6" dy="10.09">46</tspan><tspan x="1295.6" dy="10.09">44</tspan><tspan x="1295.6" dy="10.09">42</tspan><tspan x="1295.6" dy="10.09">40</tspan><tspan x="1295.6" dy="10.09">38</tspan><tspan x="1295.6" dy="10.09">36</tspan><tspan x="1295.6" dy="10.09">34</tspan><tspan x="1295.6" dy="10.09">32</tspan><tspan x="1295.6" dy="10.09">30</tspan><tspan x="1295.6" dy="10.09">28</tspan><tspan x="1295.6" dy="10.09">26</tspan><tspan x="1295.6" dy="10.09">24</tspan><tspan x="1295.6" dy="10.09">22</tspan><tspan x="1295.6" dy="10.09">20</tspan><tspan x="1295.6" dy="10.09">18</tspan><tspan x="1295.6" dy="10.09">16</tspan><tspan x="1295.6" dy="10.09">14</tspan><tspan x="1295.6" dy="10.09">12</tspan><tspan x="1295.6" dy="10.09">10</tspan><tspan x="1295.6" dy="10.09">8</tspan><tspan x="1295.6" dy="10.09">6</tspan><tspan x="1295.6" dy="10.09">4</tspan><tspan x="1295.6" dy="10.09">2</tspan><tspan x="1295.6" dy="10.09">0</tspan></text>
</svg>
</body></html>
